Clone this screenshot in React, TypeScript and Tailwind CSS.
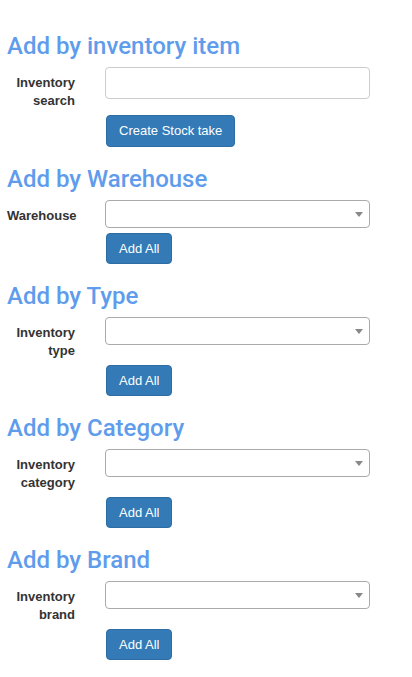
import React from "react";

type Section = {
  title: string;
  label: string[];
  kind: "input" | "select";
  button: string;
};

const SECTIONS: Section[] = [
  { title: "Add by inventory item", label: ["Inventory", "search"], kind: "input", button: "Create Stock take" },
  { title: "Add by Warehouse", label: ["Warehouse"], kind: "select", button: "Add All" },
  { title: "Add by Type", label: ["Inventory", "type"], kind: "select", button: "Add All" },
  { title: "Add by Category", label: ["Inventory", "category"], kind: "select", button: "Add All" },
  { title: "Add by Brand", label: ["Inventory", "brand"], kind: "select", button: "Add All" },
];

function Control({ kind }: { kind: Section["kind"] }) {
  if (kind === "input") {
    return <input type="text" className="w-[265px] h-[32px] border border-[#ccc] rounded-[4px] bg-white px-3 outline-none" />;
  }
  return (
    <div className="w-[265px] h-[28px] border border-[#aaa] rounded-[4px] bg-white flex items-center justify-end pr-[6px]">
      <span className="w-0 h-0 border-l-[4px] border-r-[4px] border-t-[5px] border-l-transparent border-r-transparent border-t-[#888]" />
    </div>
  );
}

export default function App() {
  return (
    <div className="min-h-screen bg-white px-[7px] pt-[33px] font-['Liberation_Sans',Arial,sans-serif] text-[#333]">
      {SECTIONS.map((s, i) => (
        <section key={s.title} className={i === 0 ? "" : "mt-[19px]"}>
          <h3 className="font-['Roboto',sans-serif] font-medium text-[24px] leading-[26px] text-[#5f9cec]">{s.title}</h3>
          <div className="mt-[8px] flex items-start">
            <label className="w-[68px] shrink-0 text-right pt-[7px] text-[13px] leading-[18px] font-bold whitespace-nowrap">
              {s.label.map((l) => (
                <div key={l}>{l}</div>
              ))}
            </label>
            <div className="ml-[30px]">
              <Control kind={s.kind} />
            </div>
          </div>
          <div className="mt-[5px] ml-[99px]">
            <button className={`${i === 0 ? "h-[32px]" : "h-[31px]"} px-[12px] bg-[#337ab7] border border-[#2e6da4] rounded-[4px] text-white text-[13px] leading-[18px]`}>
              {s.button}
            </button>
          </div>
        </section>
      ))}
    </div>
  );
}
